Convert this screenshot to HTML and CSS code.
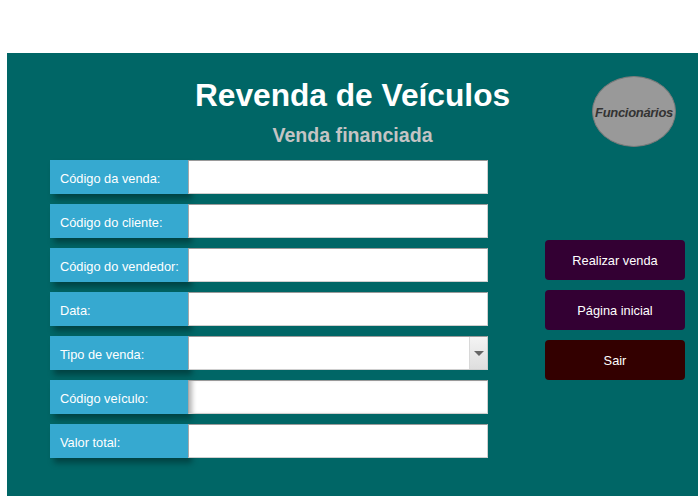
FILE: index.html
```html
<!DOCTYPE html>
<html lang="pt">
<head>
<meta charset="utf-8">
<title>Revenda de Veículos</title>
<link rel="stylesheet" href="styles.css">
</head>
<body>
<div class="top"></div>
<main class="panel">
  <header class="header">
    <div class="spacer"></div>
    <div class="titles">
      <h1 class="title">Revenda de Veículos</h1>
      <h2 class="subtitle">Venda financiada</h2>
    </div>
    <div class="side">
      <div class="circle">Funcionários</div>
    </div>
  </header>
  <section class="content">
    <form class="form">
      <div class="row"><label class="label">Código da venda:</label><input class="field" type="text"></div>
      <div class="row"><label class="label">Código do cliente:</label><input class="field" type="text"></div>
      <div class="row"><label class="label">Código do vendedor:</label><input class="field" type="text"></div>
      <div class="row"><label class="label">Data:</label><input class="field" type="text"></div>
      <div class="row"><label class="label">Tipo de venda:</label>
        <div class="field select"><span class="arrow"><span class="tri"></span></span></div>
      </div>
      <div class="row"><label class="label">Código veículo:</label><input class="field inset" type="text"></div>
      <div class="row"><label class="label">Valor total:</label><input class="field" type="text"></div>
    </form>
    <div class="buttons">
      <button class="btn purple" type="button">Realizar venda</button>
      <button class="btn purple" type="button">Página inicial</button>
      <button class="btn maroon" type="button">Sair</button>
    </div>
  </section>
</main>
</body>
</html>
```
FILE: styles.css
```css
html, body {
  margin: 0;
  padding: 0;
  background: #ffffff;
  font-family: "Liberation Sans", Arial, sans-serif;
}
.top {
  height: 53px;
}
.panel {
  margin-left: 7px;
  height: 443px;
  background: #006666;
  padding-top: 23px;
  box-sizing: border-box;
}
.header {
  display: grid;
  grid-template-columns: 1fr auto 1fr;
  align-items: start;
}
.titles {
  display: flex;
  flex-direction: column;
  align-items: center;
  margin-top: 1px;
}
.title {
  margin: 0;
  font-size: 31.7px;
  line-height: 36px;
  font-weight: bold;
  color: #ffffff;
}
.subtitle {
  margin: 10px 0 0 0;
  font-size: 19.6px;
  line-height: 24px;
  font-weight: bold;
  color: #c4c4c4;
}
.side {
  display: flex;
  justify-content: flex-end;
  padding-right: 22px;
}
.circle {
  width: 84px;
  height: 71px;
  box-sizing: border-box;
  border-radius: 50%;
  background: #999999;
  border: 1px solid #7a7a7a;
  display: flex;
  align-items: center;
  justify-content: center;
  padding-top: 1px;
  font-size: 13px;
  font-weight: bold;
  font-style: italic;
  color: #333333;
  letter-spacing: -0.3px;
  white-space: nowrap;
}
.content {
  display: flex;
  margin-top: 13px;
  padding-left: 43px;
}
.form {
  display: flex;
  flex-direction: column;
  gap: 10px;
  margin: 0;
}
.row {
  display: flex;
  height: 34px;
}
.label {
  width: 138px;
  height: 34px;
  box-sizing: border-box;
  background: #36a9d0;
  color: #ffffff;
  font-size: 12.8px;
  line-height: 34px;
  padding-top: 2px;
  padding-left: 10px;
  box-shadow: 4px 5px 6px rgba(0, 0, 0, 0.35);
}
.field {
  width: 300px;
  height: 34px;
  box-sizing: border-box;
  margin: 0;
  background: #ffffff;
  border-top: 1px solid #9a9a9a;
  border-left: 1px solid #a8a8a8;
  border-right: 1px solid #cfcfcf;
  border-bottom: 1px solid #cfcfcf;
  padding: 0;
  font: inherit;
}
.inset {
  box-shadow: inset 6px 0 5px -3px rgba(0, 0, 0, 0.3);
}
.select {
  display: flex;
  justify-content: flex-end;
}
.arrow {
  width: 17px;
  height: 32px;
  background: linear-gradient(#f4f4f4, #dedede);
  border-left: 1px solid #d8d8d8;
  display: flex;
  align-items: center;
  justify-content: center;
}
.tri {
  width: 0;
  height: 0;
  border-left: 5px solid transparent;
  border-right: 5px solid transparent;
  border-top: 5px solid #666666;
}
.buttons {
  display: flex;
  flex-direction: column;
  gap: 10px;
  margin-top: 80px;
  margin-left: 57px;
}
.btn {
  width: 140px;
  height: 40px;
  border: none;
  border-radius: 4px;
  color: #ffffff;
  font-family: "Liberation Sans", Arial, sans-serif;
  font-size: 12.8px;
  padding: 0;
}
.purple {
  background: #330033;
}
.maroon {
  background: #330000;
}
```
